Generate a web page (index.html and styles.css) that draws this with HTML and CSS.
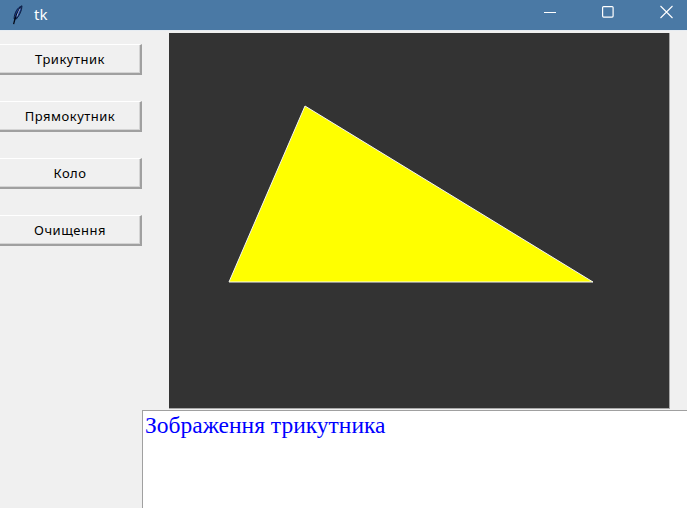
FILE: index.html
```html
<!DOCTYPE html>
<html>
<head>
<meta charset="utf-8">
<link rel="stylesheet" href="styles.css">
</head>
<body>
<div class="window">
  <div class="titlebar">
    <svg class="feather" width="12" height="20" viewBox="0 0 12 20">
      <path d="M11 0.8 C6.5 2.5 3.6 7 3 13.8 L5.4 14 C8.6 10 10.8 6 11 0.8 Z" fill="#1d3f8f" stroke="#0a1838" stroke-width="0.9"/>
      <path d="M9.5 2.5 C7.5 5.5 5.2 10 3.8 14.5 L2.6 19.2" fill="none" stroke="#050a18" stroke-width="1.3"/>
      <path d="M9.2 3.5 C8 6 6.8 8.5 5.8 11.5" fill="none" stroke="#a9c1ee" stroke-width="0.9"/>
    </svg>
    <span class="title">tk</span>
    <div class="controls">
      <svg class="ctl" width="58" height="30" viewBox="0 0 58 30"><line x1="0" y1="12.5" x2="12" y2="12.5" stroke="#fff" stroke-width="1"/></svg>
      <svg class="ctl" width="58" height="30" viewBox="0 0 58 30"><rect x="0.6" y="6.6" width="10.5" height="10.5" fill="none" stroke="#fff" stroke-width="1.2" rx="1"/></svg>
      <svg class="ctl" width="27" height="30" viewBox="0 0 27 30"><path d="M0.5 6 L12.5 18 M12.5 6 L0.5 18" stroke="#fff" stroke-width="1.1"/></svg>
    </div>
  </div>
  <div class="content">
    <div class="toprow">
      <div class="buttons">
        <div class="btn">Трикутник</div>
        <div class="btn">Прямокутник</div>
        <div class="btn">Коло</div>
        <div class="btn">Очищення</div>
      </div>
      <div class="canvas">
        <svg width="500" height="375" viewBox="0 0 500 375">
          <polygon points="136,73 60,249 424,249" fill="#ffff00" stroke="#f4f4f4" stroke-width="1"/>
        </svg>
      </div>
    </div>
    <div class="textbox">Зображення трикутника</div>
  </div>
</div>
</body>
</html>
```
FILE: styles.css
```css
html, body {
  margin: 0;
  padding: 0;
  width: 687px;
  height: 508px;
  overflow: hidden;
  background: #f0f0f0;
}
.window {
  width: 687px;
  height: 508px;
  display: flex;
  flex-direction: column;
  overflow: hidden;
}
.titlebar {
  height: 30px;
  flex: none;
  background: #4a79a5;
  border-bottom: 1px solid #e6ecf2;
  display: flex;
  align-items: center;
}
.feather {
  margin-left: 11px;
  margin-top: -1px;
}
.title {
  margin-left: 11px;
  color: #fff;
  font-family: "Noto Sans", "DejaVu Sans", sans-serif;
  font-size: 15px;
  margin-top: -3px;
}
.controls {
  margin-left: auto;
  display: flex;
  height: 30px;
}
.ctl {
  display: block;
}
.content {
  flex: 1;
  display: flex;
  flex-direction: column;
  background: #f0f0f0;
}
.toprow {
  display: flex;
  align-items: flex-start;
}
.buttons {
  width: 142px;
  padding-top: 13px;
  display: flex;
  flex-direction: column;
  gap: 26px;
}
.btn {
  height: 31px;
  box-sizing: border-box;
  width: 142px;
  border-top: 1px solid #ffffff;
  border-right: 2px solid #a0a0a0;
  border-bottom: 2px solid #a0a0a0;
  background: #f0f0f0;
  box-shadow: inset -1px -1px 0 #d4d4d4;
  display: flex;
  align-items: center;
  justify-content: center;
  font-family: "Noto Sans", "DejaVu Sans", sans-serif;
  font-size: 13px;
  letter-spacing: 0.5px;
  color: #000;
  padding-bottom: 1px;
}
.canvas {
  margin-left: 27px;
  margin-top: 2px;
  width: 500px;
  height: 375px;
  background: #333333;
  border-right: 1px solid #a8a8a8;
  border-bottom: 1px solid #a8a8a8;
}
.canvas svg {
  display: block;
}
.textbox {
  margin-top: 1px;
  margin-left: 142px;
  flex: 1;
  background: #ffffff;
  border-top: 1px solid #a0a0a0;
  border-left: 1px solid #a0a0a0;
  color: #0000ff;
  font-family: "Liberation Serif", "Times New Roman", serif;
  font-size: 23.5px;
  line-height: 27px;
  padding-left: 2px;
  padding-top: 1px;
}
```
